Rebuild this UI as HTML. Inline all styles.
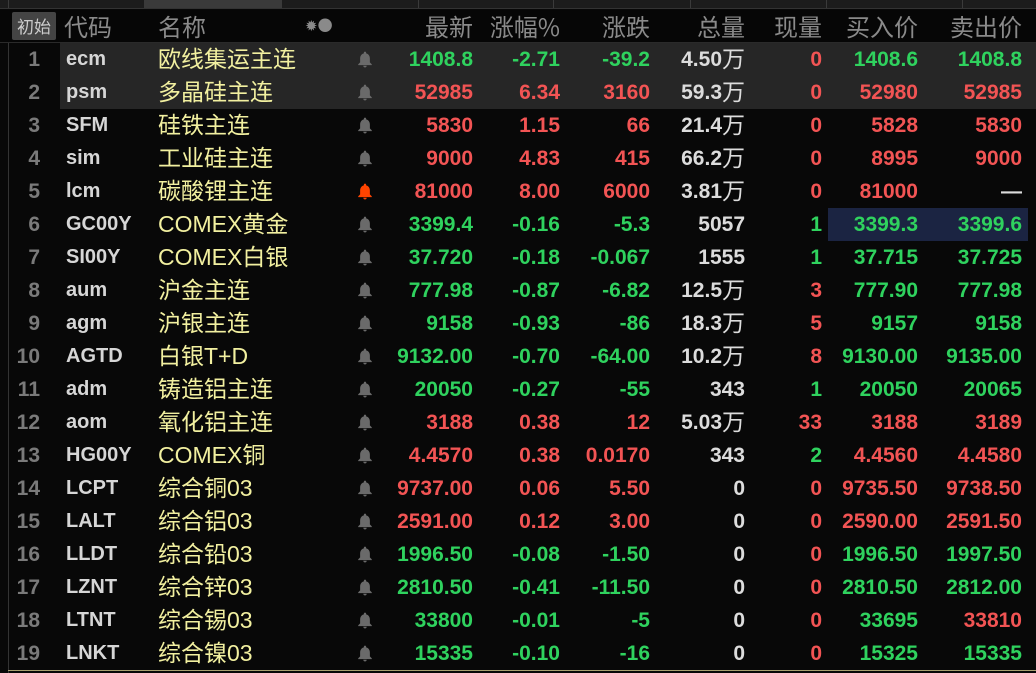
<!DOCTYPE html>
<html><head><meta charset="utf-8"><style>
*{margin:0;padding:0;box-sizing:border-box}
body{width:1036px;height:673px;background:#080808;overflow:hidden;font-family:"Liberation Sans","Noto Sans CJK SC",sans-serif;position:relative}
.tabs{position:absolute;left:0;top:0;width:1036px;height:9px;background:#1c1c1c;border-bottom:1px solid #333}
.tab{position:absolute;top:0;height:8px;border-left:1px solid #3a3a3a}
.hdr{position:absolute;top:10px;left:0;width:1036px;height:33px;background:#060606;border-bottom:1px solid #2a2a2a}
.h{position:absolute;top:2px;font-size:24px;color:#8a8a8a;font-family:"Noto Sans CJK SC",sans-serif;line-height:30px}
.init{position:absolute;left:12px;top:12px;width:44px;height:28px;background:#444;color:#ccc;font-size:17px;line-height:28px;text-align:center;border-radius:2px;font-family:"Noto Sans CJK SC",sans-serif}
.row{position:absolute;left:0;width:1036px;height:33px}
.row div{position:absolute;top:0;line-height:33px;font-size:21px;white-space:nowrap;font-weight:bold}
.n{left:0;width:50px;text-align:right;padding-right:10px;color:#7a7a7a}
.c{left:66px;color:#d6d6d6;font-size:20px!important}
.nm{left:158px;color:#f2f0a0;font-size:23px!important;font-weight:normal!important;font-family:"Liberation Sans","Noto Sans CJK SC",sans-serif}
.r{text-align:right}
.g{color:#2fd25e}.rd{color:#f25454}.w{color:#dcdcdc}
.wan{font-family:"Noto Sans CJK SC",sans-serif;font-size:23px;font-weight:normal;display:inline-block;line-height:23px;vertical-align:-1px}
</style></head><body>
<div class="tabs">
<div class="tab" style="left:8px;width:136px"></div>
<div class="tab" style="left:144px;width:137px;background:#3a3a3a"></div>
<div class="tab" style="left:281px;width:137px"></div>
<div class="tab" style="left:418px;width:135px"></div>
<div class="tab" style="left:553px;width:137px"></div>
<div class="tab" style="left:690px;width:136px"></div>
<div class="tab" style="left:826px;width:136px"></div>
<div class="tab" style="left:962px;width:74px"></div>
</div>
<div class="hdr"></div>
<div class="init">初始</div>
<div class="h" style="left:64px;top:11px">代码</div>
<div class="h" style="left:158px;top:11px">名称</div>
<div class="h" style="left:305px;top:11px;font-size:15px">✹●</div>
<div class="h" style="right:563px;top:11px">最新</div>
<div class="h" style="right:476px;top:11px">涨幅%</div>
<div class="h" style="right:386px;top:11px">涨跌</div>
<div class="h" style="right:291px;top:11px">总量</div>
<div class="h" style="right:214px;top:11px">现量</div>
<div class="h" style="right:118px;top:11px">买入价</div>
<div class="h" style="right:14px;top:11px">卖出价</div>
<div style="position:absolute;left:60px;top:43px;width:976px;height:66px;background:#262626"></div>
<div style="position:absolute;left:828px;top:208px;width:200px;height:33px;background:#1b2442"></div>
<div style="position:absolute;left:8px;top:43px;width:1px;height:630px;background:#333"></div>
<div id="rows"></div>
<script>
const D=[
["ecm","欧线集运主连","g","1408.8","-2.71","-39.2","4.50万","0","rd","1408.6","1408.8","g","g"],
["psm","多晶硅主连","rd","52985","6.34","3160","59.3万","0","rd","52980","52985","rd","rd"],
["SFM","硅铁主连","rd","5830","1.15","66","21.4万","0","rd","5828","5830","rd","rd"],
["sim","工业硅主连","rd","9000","4.83","415","66.2万","0","rd","8995","9000","rd","rd"],
["lcm","碳酸锂主连","rd","81000","8.00","6000","3.81万","0","rd","81000","—","rd","w"],
["GC00Y","COMEX黄金","g","3399.4","-0.16","-5.3","5057","1","g","3399.3","3399.6","g","g"],
["SI00Y","COMEX白银","g","37.720","-0.18","-0.067","1555","1","g","37.715","37.725","g","g"],
["aum","沪金主连","g","777.98","-0.87","-6.82","12.5万","3","rd","777.90","777.98","g","g"],
["agm","沪银主连","g","9158","-0.93","-86","18.3万","5","rd","9157","9158","g","g"],
["AGTD","白银T+D","g","9132.00","-0.70","-64.00","10.2万","8","rd","9130.00","9135.00","g","g"],
["adm","铸造铝主连","g","20050","-0.27","-55","343","1","g","20050","20065","g","g"],
["aom","氧化铝主连","rd","3188","0.38","12","5.03万","33","rd","3188","3189","rd","rd"],
["HG00Y","COMEX铜","rd","4.4570","0.38","0.0170","343","2","g","4.4560","4.4580","rd","rd"],
["LCPT","综合铜03","rd","9737.00","0.06","5.50","0","0","rd","9735.50","9738.50","rd","rd"],
["LALT","综合铝03","rd","2591.00","0.12","3.00","0","0","rd","2590.00","2591.50","rd","rd"],
["LLDT","综合铅03","g","1996.50","-0.08","-1.50","0","0","rd","1996.50","1997.50","g","g"],
["LZNT","综合锌03","g","2810.50","-0.41","-11.50","0","0","rd","2810.50","2812.00","g","g"],
["LTNT","综合锡03","g","33800","-0.01","-5","0","0","rd","33695","33810","g","rd"],
["LNKT","综合镍03","g","15335","-0.10","-16","0","0","rd","15325","15335","g","g"]];
let h="";
D.forEach((d,i)=>{
const top=43+i*33;
const bc=i==4?"#ff4400":"#6a6a6a";
h+=`<div class="row" style="top:${top}px">
<div class="n">${i+1}</div><div class="c">${d[0]}</div><div class="nm">${d[1]}</div>
<svg style="position:absolute;left:357px;top:8px" width="16" height="17" viewBox="0 0 14 15"><path d="M7 0.5c.6 0 1 .4 1 1v.6c2 .5 3.3 2.2 3.3 4.4v3.5l1.7 1.8v.7H1v-.7l1.7-1.8V6.5c0-2.2 1.3-3.9 3.3-4.4v-.6c0-.6.4-1 1-1zM5.5 13h3c0 .9-.7 1.5-1.5 1.5S5.5 13.9 5.5 13z" fill="${bc}"/></svg>
<div class="r ${d[2]}" style="right:563px">${d[3]}</div>
<div class="r ${d[2]}" style="right:476px">${d[4]}</div>
<div class="r ${d[2]}" style="right:386px">${d[5]}</div>
<div class="r w" style="right:291px">${d[6].replace('万','<span class="wan">万</span>')}</div>
<div class="r ${d[8]}" style="right:214px">${d[7]}</div>
<div class="r ${d[11]}" style="right:118px">${d[9]}</div>
<div class="r ${d[12]}" style="right:14px">${d[10]}</div></div>`;});
document.getElementById("rows").innerHTML=h;
</script>
<div style="position:absolute;left:8px;top:670px;width:1028px;height:1px;background:#a8a070"></div>
</body></html>
